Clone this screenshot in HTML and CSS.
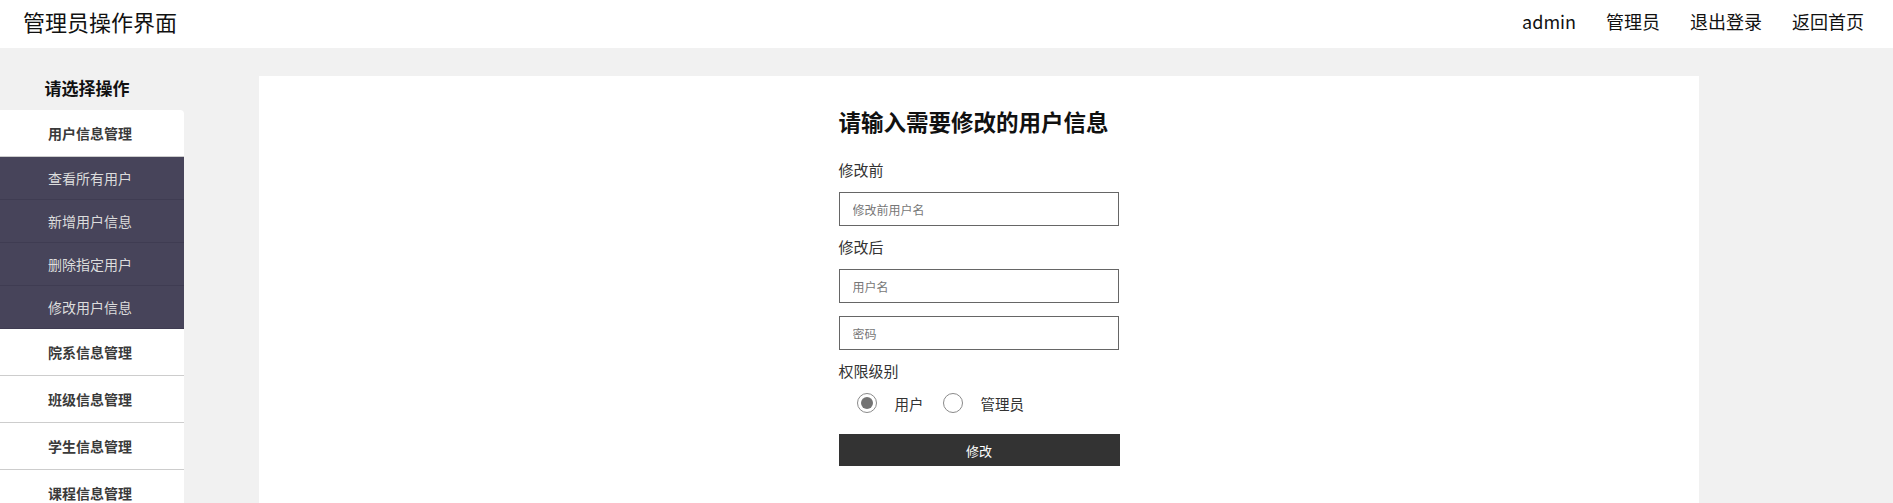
FILE: index.html
```html
<!DOCTYPE html>
<html lang="zh-CN">
<head>
<meta charset="utf-8">
<title>管理员操作界面</title>
<link rel="stylesheet" href="styles.css">
</head>
<body>
<header class="topbar">
  <div class="brand">管理员操作界面</div>
  <nav class="topnav">
    <a class="navlink">admin</a>
    <a class="navlink">管理员</a>
    <a class="navlink">退出登录</a>
    <a class="navlink">返回首页</a>
  </nav>
</header>
<div class="main">
  <aside class="sidebar">
    <div class="side-title">请选择操作</div>
    <ul class="menu">
      <li class="menu-item first">用户信息管理</li>
      <li class="sub-item">查看所有用户</li>
      <li class="sub-item">新增用户信息</li>
      <li class="sub-item">删除指定用户</li>
      <li class="sub-item">修改用户信息</li>
      <li class="menu-item">院系信息管理</li>
      <li class="menu-item">班级信息管理</li>
      <li class="menu-item">学生信息管理</li>
      <li class="menu-item">课程信息管理</li>
    </ul>
  </aside>
  <section class="card">
    <form class="form">
      <h2 class="form-title">请输入需要修改的用户信息</h2>
      <div class="label first-label">修改前</div>
      <input class="field" type="text" placeholder="修改前用户名">
      <div class="label">修改后</div>
      <input class="field" type="text" placeholder="用户名">
      <input class="field second" type="password" placeholder="密码">
      <div class="label">权限级别</div>
      <div class="radios">
        <input class="radio" type="radio" name="role" checked><span class="radio-label">用户</span>
        <input class="radio" type="radio" name="role"><span class="radio-label">管理员</span>
      </div>
      <button class="submit" type="button">修改</button>
    </form>
  </section>
</div>
</body>
</html>
```
FILE: styles.css
```css
* { box-sizing: border-box; }
html, body { margin: 0; padding: 0; }
body {
  background: #f1f1f1;
  font-family: "Noto Sans CJK SC", "Noto Sans", sans-serif;
  color: #222;
  overflow: hidden;
}
.topbar {
  height: 48px;
  background: #fff;
  display: flex;
  align-items: center;
  justify-content: space-between;
  padding: 0 29px 6px 23px;
}
.brand {
  font-size: 22px;
  color: #111;
  line-height: 30px;
}
.topnav {
  display: flex;
  gap: 30px;
}
.navlink {
  font-size: 18px;
  color: #111;
  line-height: 26px;
}
.main {
  display: flex;
  align-items: flex-start;
}
.sidebar {
  width: 184px;
  flex: none;
}
.side-title {
  height: 62px;
  padding: 28px 10px 0 0;
  text-align: center;
  font-size: 17px;
  font-weight: bold;
  line-height: 24px;
  color: #111;
}
.menu {
  list-style: none;
  margin: 0;
  padding: 0;
}
.menu-item {
  height: 47px;
  line-height: 46px;
  background: #fff;
  border-bottom: 1px solid #cdcdcd;
  text-align: center;
  padding-right: 4px;
  font-size: 14px;
  font-weight: bold;
  color: #3a3a3a;
}
.menu-item.first {
  border-top-right-radius: 4px;
}
.sub-item {
  height: 43px;
  line-height: 42px;
  background: #47445a;
  border-bottom: 1px solid #3f3c52;
  text-align: center;
  padding-right: 4px;
  font-size: 14px;
  color: #dcdcdc;
}
.card {
  margin: 28px 0 0 75px;
  width: 1440px;
  height: 520px;
  background: #fff;
  display: flex;
  justify-content: center;
}
.form {
  width: 281px;
  padding-top: 30px;
}
.form-title {
  margin: 0;
  font-size: 22.5px;
  line-height: 30px;
  font-weight: bold;
  color: #111;
  white-space: nowrap;
}
.label {
  font-size: 15px;
  line-height: 20px;
  color: #333;
  margin-top: 11px;
}
.first-label {
  margin-top: 24px;
}
.field {
  display: block;
  width: 280px;
  height: 34px;
  margin-top: 12px;
  border: 1px solid #666;
  padding: 0 13px;
  font-family: inherit;
  font-size: 12px;
  color: #333;
  outline: none;
}
.field::placeholder {
  color: #777;
}
.field.second {
  margin-top: 13px;
}
.radios {
  display: flex;
  align-items: center;
  height: 24px;
  margin-top: 10px;
  padding-left: 18px;
}
.radio {
  appearance: none;
  -webkit-appearance: none;
  width: 20px;
  height: 20px;
  margin: 0 18px 0 0;
  border: 1px solid #8a8a8a;
  border-radius: 50%;
  background: #fff;
  display: flex;
  align-items: center;
  justify-content: center;
}
.radio:checked::after {
  content: "";
  width: 12px;
  height: 12px;
  border-radius: 50%;
  background: #737373;
}
.radio-label {
  font-size: 14.5px;
  color: #333;
  margin-right: 19px;
}
.submit {
  display: block;
  width: 281px;
  height: 32px;
  margin-top: 19px;
  border: none;
  background: #333;
  color: #fff;
  font-family: inherit;
  font-size: 13px;
}
```
